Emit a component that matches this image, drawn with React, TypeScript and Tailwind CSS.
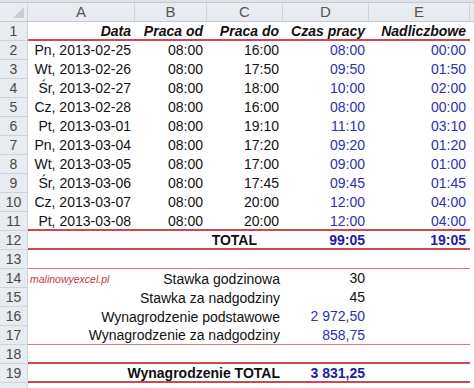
import React from 'react'

type Line = 'none' | 'thin' | 'thick'

const rows = [
  ['Pn, 2013-02-25', '08:00', '16:00', '08:00', '00:00'],
  ['Wt, 2013-02-26', '08:00', '17:50', '09:50', '01:50'],
  ['Śr, 2013-02-27', '08:00', '18:00', '10:00', '02:00'],
  ['Cz, 2013-02-28', '08:00', '16:00', '08:00', '00:00'],
  ['Pt, 2013-03-01', '08:00', '19:10', '11:10', '03:10'],
  ['Pn, 2013-03-04', '08:00', '17:20', '09:20', '01:20'],
  ['Wt, 2013-03-05', '08:00', '17:00', '09:00', '01:00'],
  ['Śr, 2013-03-06', '08:00', '17:45', '09:45', '01:45'],
  ['Cz, 2013-03-07', '08:00', '20:00', '12:00', '04:00'],
  ['Pt, 2013-03-08', '08:00', '20:00', '12:00', '04:00'],
]

const lineClass = (line: Line) =>
  line === 'thick'
    ? 'border-b-2 border-[#d2474e]'
    : line === 'thin'
      ? 'border-b border-[#d9777c]'
      : ''

const Row = ({
  num,
  line = 'none',
  children,
}: {
  num?: number
  line?: Line
  children?: React.ReactNode
}) => (
  <div className="flex h-[19px]">
    <div className="w-[28px] shrink-0 bg-[#e8ebef] border-r border-b border-[#cdd3da] text-center text-[#4a4a4a] leading-[19px]">
      {num}
    </div>
    <div
      className={`w-[442px] shrink-0 grid grid-cols-[107px_72px_76px_86px_101px] ${lineClass(line)}`}
    >
      {children}
    </div>
    <div className="flex-1" />
  </div>
)

const Cell = ({
  children,
  className = '',
}: {
  children?: React.ReactNode
  className?: string
}) => (
  <div className={`text-right pr-1 leading-[18px] whitespace-nowrap ${className}`}>
    {children}
  </div>
)

const Label = ({
  children,
  value,
  brand,
}: {
  children: React.ReactNode
  value: string
  brand?: boolean
}) => (
  <>
    <div className="col-span-3 flex items-center justify-between pr-[3px] leading-[18px] whitespace-nowrap">
      <span className="pl-[2px] italic text-[10.5px] text-[#c0393f]">
        {brand ? 'malinowyexcel.pl' : ''}
      </span>
      <span>{children}</span>
    </div>
    <Cell className={value.includes(',') ? 'text-[#3030b0]' : ''}>{value}</Cell>
  </>
)

export default function App() {
  const letters = ['A', 'B', 'C', 'D', 'E']
  return (
    <div className="w-[474px] h-[388px] overflow-hidden bg-white text-[14px] text-[#111] font-['Liberation_Sans',Arial,sans-serif]">
      <div className="h-[3px] bg-[#dfe3e8] border-b border-[#c4cad1]" />
      <div className="flex h-[19px] bg-[#e8ebef] border-b border-[#c4cad1] text-[#555]">
        <div className="w-[28px] shrink-0 border-r border-[#cdd3da] relative overflow-hidden">
          <div className="absolute right-[3px] bottom-[3px] w-0 h-0 border-l-[11px] border-l-transparent border-b-[11px] border-b-[#c8ccd1]" />
        </div>
        <div className="w-[442px] shrink-0 grid grid-cols-[107px_72px_76px_86px_101px]">
          {letters.map((l) => (
            <div key={l} className="text-center text-[15px] leading-[18px] border-r border-[#cdd3da]">
              {l}
            </div>
          ))}
        </div>
        <div className="flex-1" />
      </div>

      <Row num={1} line="thick">
        {['Data', 'Praca od', 'Praca do', 'Czas pracy', 'Nadliczbowe'].map((h) => (
          <Cell key={h} className="font-bold italic">
            {h}
          </Cell>
        ))}
      </Row>

      {rows.map((r, i) => (
        <Row key={i} num={i + 2} line={i === rows.length - 1 ? 'thick' : 'none'}>
          <Cell>{r[0]}</Cell>
          <Cell>{r[1]}</Cell>
          <Cell>{r[2]}</Cell>
          <Cell className="text-[#3030b0]">{r[3]}</Cell>
          <Cell className="text-[#3030b0]">{r[4]}</Cell>
        </Row>
      ))}

      <Row num={12} line="thick">
        <Cell />
        <Cell />
        <Cell className="font-bold pr-[26px]">TOTAL</Cell>
        <Cell className="font-bold text-[#1c1ca8]">99:05</Cell>
        <Cell className="font-bold text-[#1c1ca8]">19:05</Cell>
      </Row>

      <Row num={13} line="thin" />

      <Row num={14}>
        <Label value="30" brand>
          Stawka godzinowa
        </Label>
      </Row>
      <Row num={15}>
        <Label value="45">Stawka za nadgodziny</Label>
      </Row>
      <Row num={16}>
        <Label value="2 972,50">Wynagrodzenie podstawowe</Label>
      </Row>
      <Row num={17} line="thin">
        <Label value="858,75">Wynagrodzenie za nadgodziny</Label>
      </Row>

      <Row num={18} line="thick" />

      <Row num={19} line="thick">
        <div className="col-span-3 text-right pr-[3px] font-bold leading-[18px]">
          Wynagrodzenie TOTAL
        </div>
        <Cell className="font-bold text-[#1c1ca8]">3 831,25</Cell>
      </Row>
      <Row />
    </div>
  )
}
